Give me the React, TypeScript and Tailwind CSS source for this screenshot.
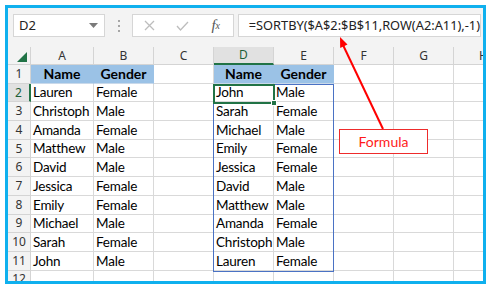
import React from "react";

const A = ["Lauren", "Christoph", "Amanda", "Matthew", "David", "Jessica", "Emily", "Michael", "Sarah", "John"];
const B = ["Female", "Male", "Female", "Male", "Male", "Female", "Female", "Male", "Female", "Male"];
const D = ["John", "Sarah", "Michael", "Emily", "Jessica", "David", "Matthew", "Amanda", "Christoph", "Lauren"];
const E = ["Male", "Female", "Male", "Female", "Female", "Male", "Male", "Female", "Male", "Female"];
const LETTERS = ["A", "B", "C", "D", "E", "F", "G", "H"];

const cellFont = { fontFamily: "Lato, 'Noto Sans', sans-serif" };
const uiFont = { fontFamily: "'Noto Sans', 'Open Sans', sans-serif" };

function Cell({ text, head }: { text?: string; head?: boolean }) {
  if (head) {
    return (
      <div
        className="flex items-center justify-center border-r border-b border-r-[#9bc2e6] border-b-[#c9d9ea] bg-[#9bc2e6] text-[14px] font-bold text-black"
        style={cellFont}
      >
        {text}
      </div>
    );
  }
  return (
    <div
      className="flex items-center overflow-hidden whitespace-nowrap border-r border-b border-[#d9d9d9] bg-white pl-[2px] text-[13.5px] tracking-[-0.2px] text-black"
      style={cellFont}
    >
      {text}
    </div>
  );
}

export default function App() {
  const rows = Array.from({ length: 12 }, (_, i) => i + 1);
  return (
    <div className="relative h-[290px] w-[493px] overflow-hidden bg-white">
      <div className="ml-[5px] mt-[5px] flex h-[279px] w-[481px] flex-col overflow-hidden border-[3px] border-[#0fb0ee] bg-white">
        {/* toolbar */}
        <div className="flex h-[39px] shrink-0 items-start bg-[#f3f3f3] pt-[6px]">
          <div className="ml-[5px] flex h-[23px] w-[94px] items-center justify-between border border-[#d6d6d6] bg-white pl-[5px] pr-[6px]">
            <span className="text-[13px] text-[#222]" style={uiFont}>D2</span>
            <svg width="9" height="5" viewBox="0 0 9 5"><polygon points="0,0 9,0 4.5,5" fill="#7a7a7a" /></svg>
          </div>
          <div className="ml-[13px] mr-[12px] flex h-[23px] flex-col items-center justify-center gap-[3px]">
            <div className="h-[2px] w-[2px] bg-[#a6a6a6]" />
            <div className="h-[2px] w-[2px] bg-[#a6a6a6]" />
            <div className="h-[2px] w-[2px] bg-[#a6a6a6]" />
          </div>
          <div className="flex h-[23px] w-[102px] items-center border border-[#d6d6d6] bg-white">
            <div className="flex w-[34px] justify-center">
              <svg width="11" height="11" viewBox="0 0 11 11"><path d="M1 1L10 10M10 1L1 10" stroke="#bdbdbd" strokeWidth="1.3" fill="none" /></svg>
            </div>
            <div className="flex w-[32px] justify-center">
              <svg width="13" height="10" viewBox="0 0 13 10"><path d="M1 5L4.5 9L12 1" stroke="#bdbdbd" strokeWidth="1.3" fill="none" /></svg>
            </div>
            <div className="flex w-[34px] justify-center text-[#555]" style={{ fontFamily: "'Liberation Serif', serif" }}>
              <span className="text-[15px] italic leading-none">f</span>
              <span className="mt-[3px] text-[10px] italic leading-none">x</span>
            </div>
          </div>
          <div className="ml-[4px] mr-[2px] flex h-[23px] flex-1 items-center border border-[#d6d6d6] bg-white pl-[10px]">
            <span className="whitespace-nowrap text-[12.8px] text-[#222]" style={uiFont}>=SORTBY($A$2:$B$11,ROW(A2:A11),-1)</span>
          </div>
        </div>
        {/* grid */}
        <div className="grid grid-cols-[23px_63px_60px_60px_60px_60px_60px_60px_60px] grid-rows-[18px_repeat(12,18.7px)]">
          <div className="relative border-r border-b border-[#d4d4d4] bg-[#f3f3f3]">
            <svg className="absolute bottom-[2px] right-[3px]" width="10" height="10" viewBox="0 0 10 10"><polygon points="10,0 10,10 0,10" fill="#217346" /></svg>
          </div>
          {LETTERS.map((l) =>
            l === "D" ? (
              <div key={l} className="flex items-center justify-center border-r border-b-2 border-r-[#d4d4d4] border-b-[#217346] bg-[#e1e1e1] text-[12px] text-[#1e5e38]" style={uiFont}>
                {l}
              </div>
            ) : (
              <div key={l} className="flex items-center justify-center border-r border-b border-[#d4d4d4] bg-[#f3f3f3] text-[12px] text-[#333]" style={uiFont}>
                {l}
              </div>
            )
          )}
          {rows.map((r) => {
            const i = r - 2;
            const hdr =
              r === 2 ? (
                <div key={`h${r}`} className="flex items-center justify-center border-r-2 border-b border-r-[#217346] border-b-[#d4d4d4] bg-[#e1e1e1] text-[12px] text-[#1e5e38]" style={uiFont}>
                  {r}
                </div>
              ) : (
                <div key={`h${r}`} className="flex items-center justify-center border-r border-b border-[#d4d4d4] bg-[#f3f3f3] text-[12px] text-[#333]" style={uiFont}>
                  {r}
                </div>
              );
            if (r === 1) {
              return (
                <React.Fragment key={r}>
                  {hdr}
                  <Cell head text="Name" />
                  <Cell head text="Gender" />
                  <Cell />
                  <Cell head text="Name" />
                  <Cell head text="Gender" />
                  <Cell />
                  <Cell />
                  <Cell />
                </React.Fragment>
              );
            }
            const has = r <= 11;
            return (
              <React.Fragment key={r}>
                {hdr}
                <Cell text={has ? A[i] : undefined} />
                <Cell text={has ? B[i] : undefined} />
                <Cell />
                <Cell text={has ? D[i] : undefined} />
                <Cell text={has ? E[i] : undefined} />
                <Cell />
                <Cell />
                <Cell />
              </React.Fragment>
            );
          })}
        </div>
      </div>

      {/* table range outline D2:E11 */}
      <div className="pointer-events-none absolute left-[213px] top-[83.7px] h-[188px] w-[121px] border border-[#4a72c4]" />
      {/* selected cell D2 */}
      <div className="pointer-events-none absolute left-[213px] top-[83.7px] h-[20.7px] w-[62px] border-2 border-[#217346]">
        <div className="absolute -bottom-[4px] -right-[4px] h-[6px] w-[6px] border border-white bg-[#217346]" />
      </div>

      {/* arrow */}
      <svg className="pointer-events-none absolute left-0 top-0" width="493" height="290" viewBox="0 0 493 290">
        <line x1="383" y1="129" x2="343" y2="45" stroke="#ff0000" strokeWidth="2" />
        <polygon points="340,37 347.5,44.5 340.2,48" fill="#ff0000" />
      </svg>
      <div className="absolute left-[339px] top-[129px] flex h-[25px] w-[89px] items-center justify-center border border-[#ee2b2b] bg-white text-[14px] text-[#ff1a1a]" style={cellFont}>
        Formula
      </div>
    </div>
  );
}
